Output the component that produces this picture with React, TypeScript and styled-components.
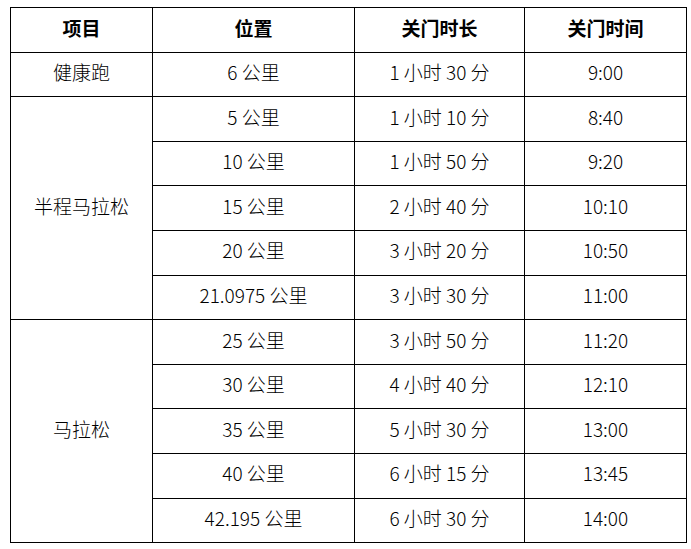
import React from "react";
import styled, { createGlobalStyle } from "styled-components";

const GlobalStyle = createGlobalStyle`
  html, body {
    margin: 0;
    padding: 0;
    background: #ffffff;
  }
  body {
    padding: 7px 0 0 10px;
    font-family: "Noto Sans CJK SC", "Noto Sans", sans-serif;
    color: #000000;
  }
`;

const Table = styled.table`
  border-collapse: collapse;
  table-layout: fixed;
  width: 676px;
  font-size: 19px;
`;

const Row = styled.tr`
  height: 44.6px;
`;

const Head = styled.th`
  border: 1px solid #000;
  font-weight: 700;
  text-align: center;
  vertical-align: middle;
  padding: 0 0 2px;
  line-height: 1.2;
`;

const Cell = styled.td`
  border: 1px solid #000;
  font-weight: 300;
  font-variant-numeric: tabular-nums;
  text-align: center;
  vertical-align: middle;
  padding: 0 0 4px;
  line-height: 1.2;
  white-space: nowrap;
`;

interface Checkpoint {
  place: string;
  limit: string;
  close: string;
}

interface Group {
  name: string;
  points: Checkpoint[];
}

const groups: Group[] = [
  {
    name: "健康跑",
    points: [{ place: "6 公里", limit: "1 小时 30 分", close: "9:00" }],
  },
  {
    name: "半程马拉松",
    points: [
      { place: "5 公里", limit: "1 小时 10 分", close: "8:40" },
      { place: "10 公里", limit: "1 小时 50 分", close: "9:20" },
      { place: "15 公里", limit: "2 小时 40 分", close: "10:10" },
      { place: "20 公里", limit: "3 小时 20 分", close: "10:50" },
      { place: "21.0975 公里", limit: "3 小时 30 分", close: "11:00" },
    ],
  },
  {
    name: "马拉松",
    points: [
      { place: "25 公里", limit: "3 小时 50 分", close: "11:20" },
      { place: "30 公里", limit: "4 小时 40 分", close: "12:10" },
      { place: "35 公里", limit: "5 小时 30 分", close: "13:00" },
      { place: "40 公里", limit: "6 小时 15 分", close: "13:45" },
      { place: "42.195 公里", limit: "6 小时 30 分", close: "14:00" },
    ],
  },
];

const App = () => {
  return (
    <>
      <GlobalStyle />
      <Table>
        <colgroup>
          <col style={{ width: 142 }} />
          <col style={{ width: 202 }} />
          <col style={{ width: 170 }} />
          <col style={{ width: 162 }} />
        </colgroup>
        <thead>
          <Row>
            <Head>项目</Head>
            <Head>位置</Head>
            <Head>关门时长</Head>
            <Head>关门时间</Head>
          </Row>
        </thead>
        <tbody>
          {groups.map((group) =>
            group.points.map((p, i) => (
              <Row key={group.name + i}>
                {i === 0 && (
                  <Cell rowSpan={group.points.length}>{group.name}</Cell>
                )}
                <Cell>{p.place}</Cell>
                <Cell>{p.limit}</Cell>
                <Cell>{p.close}</Cell>
              </Row>
            ))
          )}
        </tbody>
      </Table>
    </>
  );
};

export default App;
